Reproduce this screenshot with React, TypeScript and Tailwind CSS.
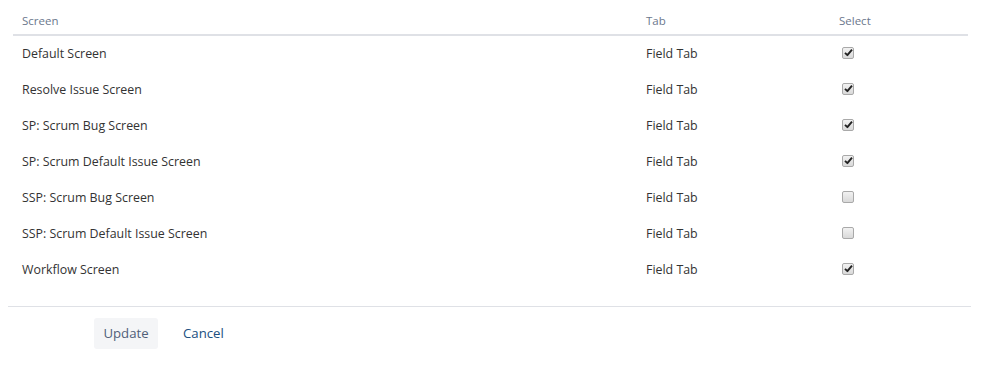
import React from "react";

const rows: [string, boolean][] = [
  ["Default Screen", true],
  ["Resolve Issue Screen", true],
  ["SP: Scrum Bug Screen", true],
  ["SP: Scrum Default Issue Screen", true],
  ["SSP: Scrum Bug Screen", false],
  ["SSP: Scrum Default Issue Screen", false],
  ["Workflow Screen", true],
];

function Box({ checked }: { checked: boolean }) {
  return (
    <span className="inline-flex h-[12px] w-[12px] items-center justify-center rounded-[2px] border border-[#a9a9a9] bg-gradient-to-b from-[#f2f2f2] to-[#d9d9d9]">
      {checked && (
        <svg width="9" height="9" viewBox="0 0 9 9">
          <path d="M1 4.8 L3.4 7.2 L8 1.6" fill="none" stroke="#222" strokeWidth="1.9" strokeLinejoin="round" />
        </svg>
      )}
    </span>
  );
}

export default function App() {
  return (
    <div className="h-[365px] w-[988px] bg-white pt-[10px] px-[8px] text-[12.4px] text-[#333] [font-family:'Open_Sans','Noto_Sans',sans-serif]">
      <div className="mx-[5px] w-[955px]">
        <div className="flex h-[26px] items-center border-b-2 border-[#dfe1e6] pb-[3px] text-[11.5px] text-[#6b778c]">
          <div className="w-[624px] pl-[9px]">Screen</div>
          <div className="w-[193px] pl-[9px]">Tab</div>
          <div className="pl-[9px]">Select</div>
        </div>
        {rows.map(([name, checked]) => (
          <div key={name} className="flex h-[36px] items-center">
            <div className="w-[624px] pl-[9px]">{name}</div>
            <div className="w-[193px] pl-[9px]">Field Tab</div>
            <div className="mb-[3px] flex pl-[12px]">
              <Box checked={checked} />
            </div>
          </div>
        ))}
      </div>
      <div className="mt-[18px] w-[963px] border-t border-[#dfe1e6] pt-[11px]">
        <div className="flex items-center pl-[86px]">
          <button className="h-[31px] w-[64px] rounded-[3px] bg-[#f4f5f7] text-[13.2px] text-[#505f79]">Update</button>
          <span className="ml-[25px] text-[13.2px] text-[#205081]">Cancel</span>
        </div>
      </div>
    </div>
  );
}
